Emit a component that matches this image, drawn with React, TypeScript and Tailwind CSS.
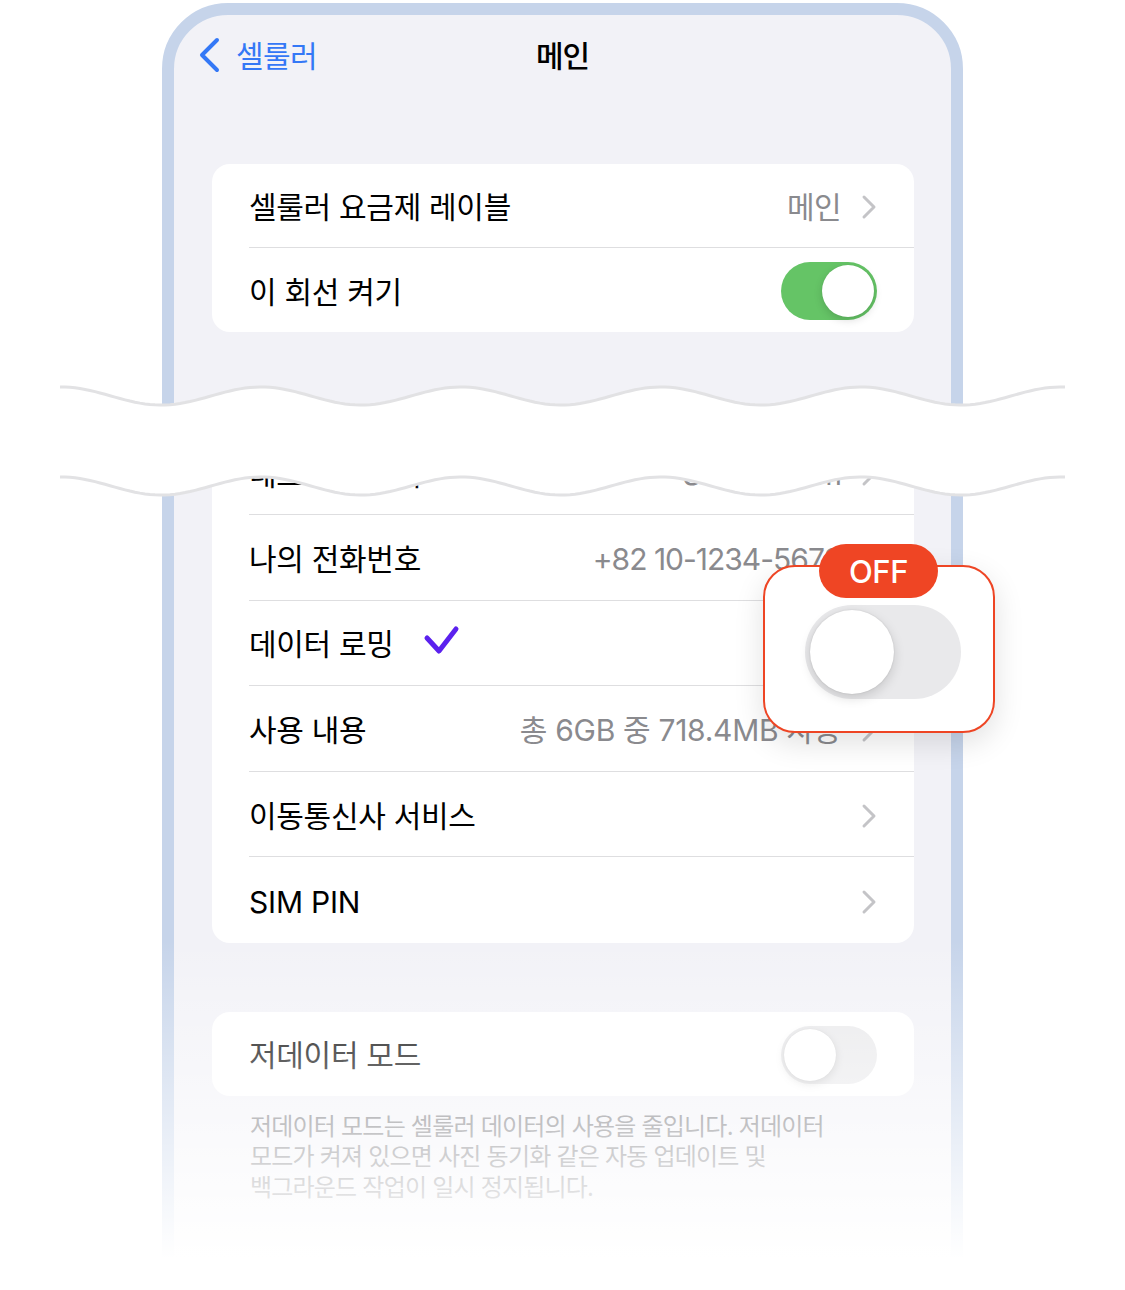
import React from 'react';

type RowProps = {
  h: string;
  last?: boolean;
  children: React.ReactNode;
};

function Row({ h, last, children }: RowProps) {
  return (
    <div className="pl-[37px]">
      <div
        className={
          h +
          ' flex items-center justify-between pr-[37px] ' +
          (last ? '' : 'border-b-[1.5px] border-[#dedee0]')
        }
      >
        {children}
      </div>
    </div>
  );
}

function Chevron() {
  return (
    <svg width="16" height="26" viewBox="0 0 16 26" className="mt-[3px] shrink-0">
      <path d="M3 3 L13 13 L3 23" fill="none" stroke="#c4c4c7" strokeWidth="3" strokeLinecap="round" strokeLinejoin="round" />
    </svg>
  );
}

function Toggle({ on }: { on: boolean }) {
  return (
    <div
      className={
        'mt-[2px] flex h-[58px] w-[96px] items-center rounded-full p-[3px] ' +
        (on ? 'justify-end bg-[#65c466]' : 'justify-start bg-[#e9e9eb]')
      }
    >
      <div className="h-[52px] w-[52px] rounded-full bg-white shadow-[0_3px_8px_rgba(0,0,0,0.15),0_0_1px_rgba(0,0,0,0.1)]" />
    </div>
  );
}

const label = 'pt-[4px] text-[30px] tracking-[-0.3px] text-black';
const value = 'pt-[4px] text-[30px] tracking-[-1px] text-[#8a8a8e]';

function wavePoints(offset: number) {
  const pts: string[] = [];
  for (let x = 60; x <= 1065; x += 5) {
    const y = 396 + offset - 9 * Math.cos((2 * Math.PI * (x - 261)) / 200);
    pts.push(`${x},${y.toFixed(2)}`);
  }
  return pts;
}

export default function App() {
  const top = wavePoints(0);
  const bottom = wavePoints(90);
  const fill = 'M' + top.join(' L') + ' L' + [...bottom].reverse().join(' L') + ' Z';

  return (
    <div className="relative h-[1290px] w-[1125px] overflow-hidden bg-white font-['Inter','Noto_Sans_CJK_KR',sans-serif]">
      {/* phone */}
      <div className="ml-[162px] mt-[3px] h-[1400px] w-[801px] rounded-t-[66px] border-[12px] border-[#c6d4ea] bg-[#f2f2f7]">
        {/* nav bar */}
        <div className="grid h-[80px] grid-cols-[1fr_auto_1fr] items-center">
          <div className="flex items-center gap-[16px] pl-[24px]">
            <svg width="22" height="36" viewBox="0 0 22 36">
              <path d="M19 3 L4 18 L19 33" fill="none" stroke="#3478f6" strokeWidth="4" strokeLinecap="round" strokeLinejoin="round" />
            </svg>
            <span className="pt-[3px] text-[30px] tracking-[-0.6px] text-[#3478f6]">셀룰러</span>
          </div>
          <span className="pt-[3px] text-[30px] font-medium tracking-[-1px] text-black">메인</span>
          <div />
        </div>

        {/* card 1 */}
        <div className="ml-[38px] mr-[37px] mt-[69px] overflow-hidden rounded-[18px] bg-white">
          <Row h="h-[84px]">
            <span className={label}>셀룰러 요금제 레이블</span>
            <div className="flex items-center gap-[20px]">
              <span className="pt-[4px] text-[30px] tracking-[-0.6px] text-[#8a8a8e]">메인</span>
              <Chevron />
            </div>
          </Row>
          <Row h="h-[84px]" last>
            <span className={label}>이 회선 켜기</span>
            <Toggle on />
          </Row>
        </div>

        {/* card 2 */}
        <div className="ml-[38px] mr-[37px] mt-[99px] overflow-hidden rounded-[18px] bg-white">
          <Row h="h-[84px]">
            <span className={label}>네트워크 선택</span>
            <div className="flex items-center gap-[20px]">
              <span className={value}>SK Telecom</span>
              <Chevron />
            </div>
          </Row>
          <Row h="h-[85.6px]">
            <span className={label}>나의 전화번호</span>
            <div className="flex items-center gap-[20px]">
              <span className={value}>+82 10-1234-5678</span>
              <Chevron />
            </div>
          </Row>
          <Row h="h-[85.6px]">
            <div className="flex items-center gap-[28px]">
              <span className={label}>데이터 로밍</span>
              <svg width="38" height="32" viewBox="0 0 38 32" className="-mt-[6px]">
                <path d="M5 14 L17 27 L34 5" fill="none" stroke="#5b21ee" strokeWidth="5" strokeLinecap="round" strokeLinejoin="round" />
              </svg>
            </div>
            <Toggle on={false} />
          </Row>
          <Row h="h-[85.6px]">
            <span className={label}>사용 내용</span>
            <div className="flex items-center gap-[20px]">
              <span className="pt-[4px] text-[30px] tracking-[-0.3px] text-[#8a8a8e]">총 6GB 중 718.4MB 사용</span>
              <Chevron />
            </div>
          </Row>
          <Row h="h-[85.6px]">
            <span className={label}>이동통신사 서비스</span>
            <Chevron />
          </Row>
          <Row h="h-[85.6px]" last>
            <span className="pt-[4px] text-[30px] tracking-[-0.2px] text-black">SIM PIN</span>
            <Chevron />
          </Row>
        </div>

        {/* card 3 */}
        <div className="ml-[38px] mr-[37px] mt-[69px] overflow-hidden rounded-[18px] bg-white">
          <Row h="h-[84px]" last>
            <span className={label}>저데이터 모드</span>
            <Toggle on={false} />
          </Row>
        </div>
        <p className="mt-[16px] px-[76px] text-[24px] leading-[30.5px] tracking-[-0.8px] text-[#6d6d72]">
          저데이터 모드는 셀룰러 데이터의 사용을 줄입니다. 저데이터
          <br />
          모드가 켜져 있으면 사진 동기화 같은 자동 업데이트 및
          <br />
          백그라운드 작업이 일시 정지됩니다.
        </p>
      </div>

      {/* bottom fade */}
      <div className="pointer-events-none absolute left-0 top-[940px] h-[350px] w-full bg-linear-to-b from-white/0 to-white to-[91%]" />

      {/* torn / wave break */}
      <svg className="pointer-events-none absolute left-0 top-0" width="1125" height="1290" viewBox="0 0 1125 1290">
        <path d={fill} fill="#ffffff" />
        <polyline points={top.join(' ')} fill="none" stroke="#e2e2e4" strokeWidth="3" />
        <polyline points={bottom.join(' ')} fill="none" stroke="#e2e2e4" strokeWidth="3" />
      </svg>

      {/* OFF callout */}
      <div className="absolute left-[763px] top-[565px] h-[168px] w-[232px] rounded-[32px] border-[2.5px] border-[#ee4524] bg-white shadow-[0_10px_30px_rgba(0,0,0,0.12)]">
        <div className="absolute left-[54px] top-[-23px] flex h-[54px] w-[119px] items-center justify-center rounded-full bg-[#ef4524]">
          <span className="pt-[2px] text-[31px] font-medium tracking-[-0.5px] text-white">OFF</span>
        </div>
        <div className="ml-[40px] mt-[38px] flex h-[94px] w-[156px] items-center rounded-full bg-[#e9e9eb] p-[5px]">
          <div className="h-[84px] w-[84px] rounded-full bg-white shadow-[0_4px_12px_rgba(0,0,0,0.15),0_0_2px_rgba(0,0,0,0.12)]" />
        </div>
      </div>
    </div>
  );
}
